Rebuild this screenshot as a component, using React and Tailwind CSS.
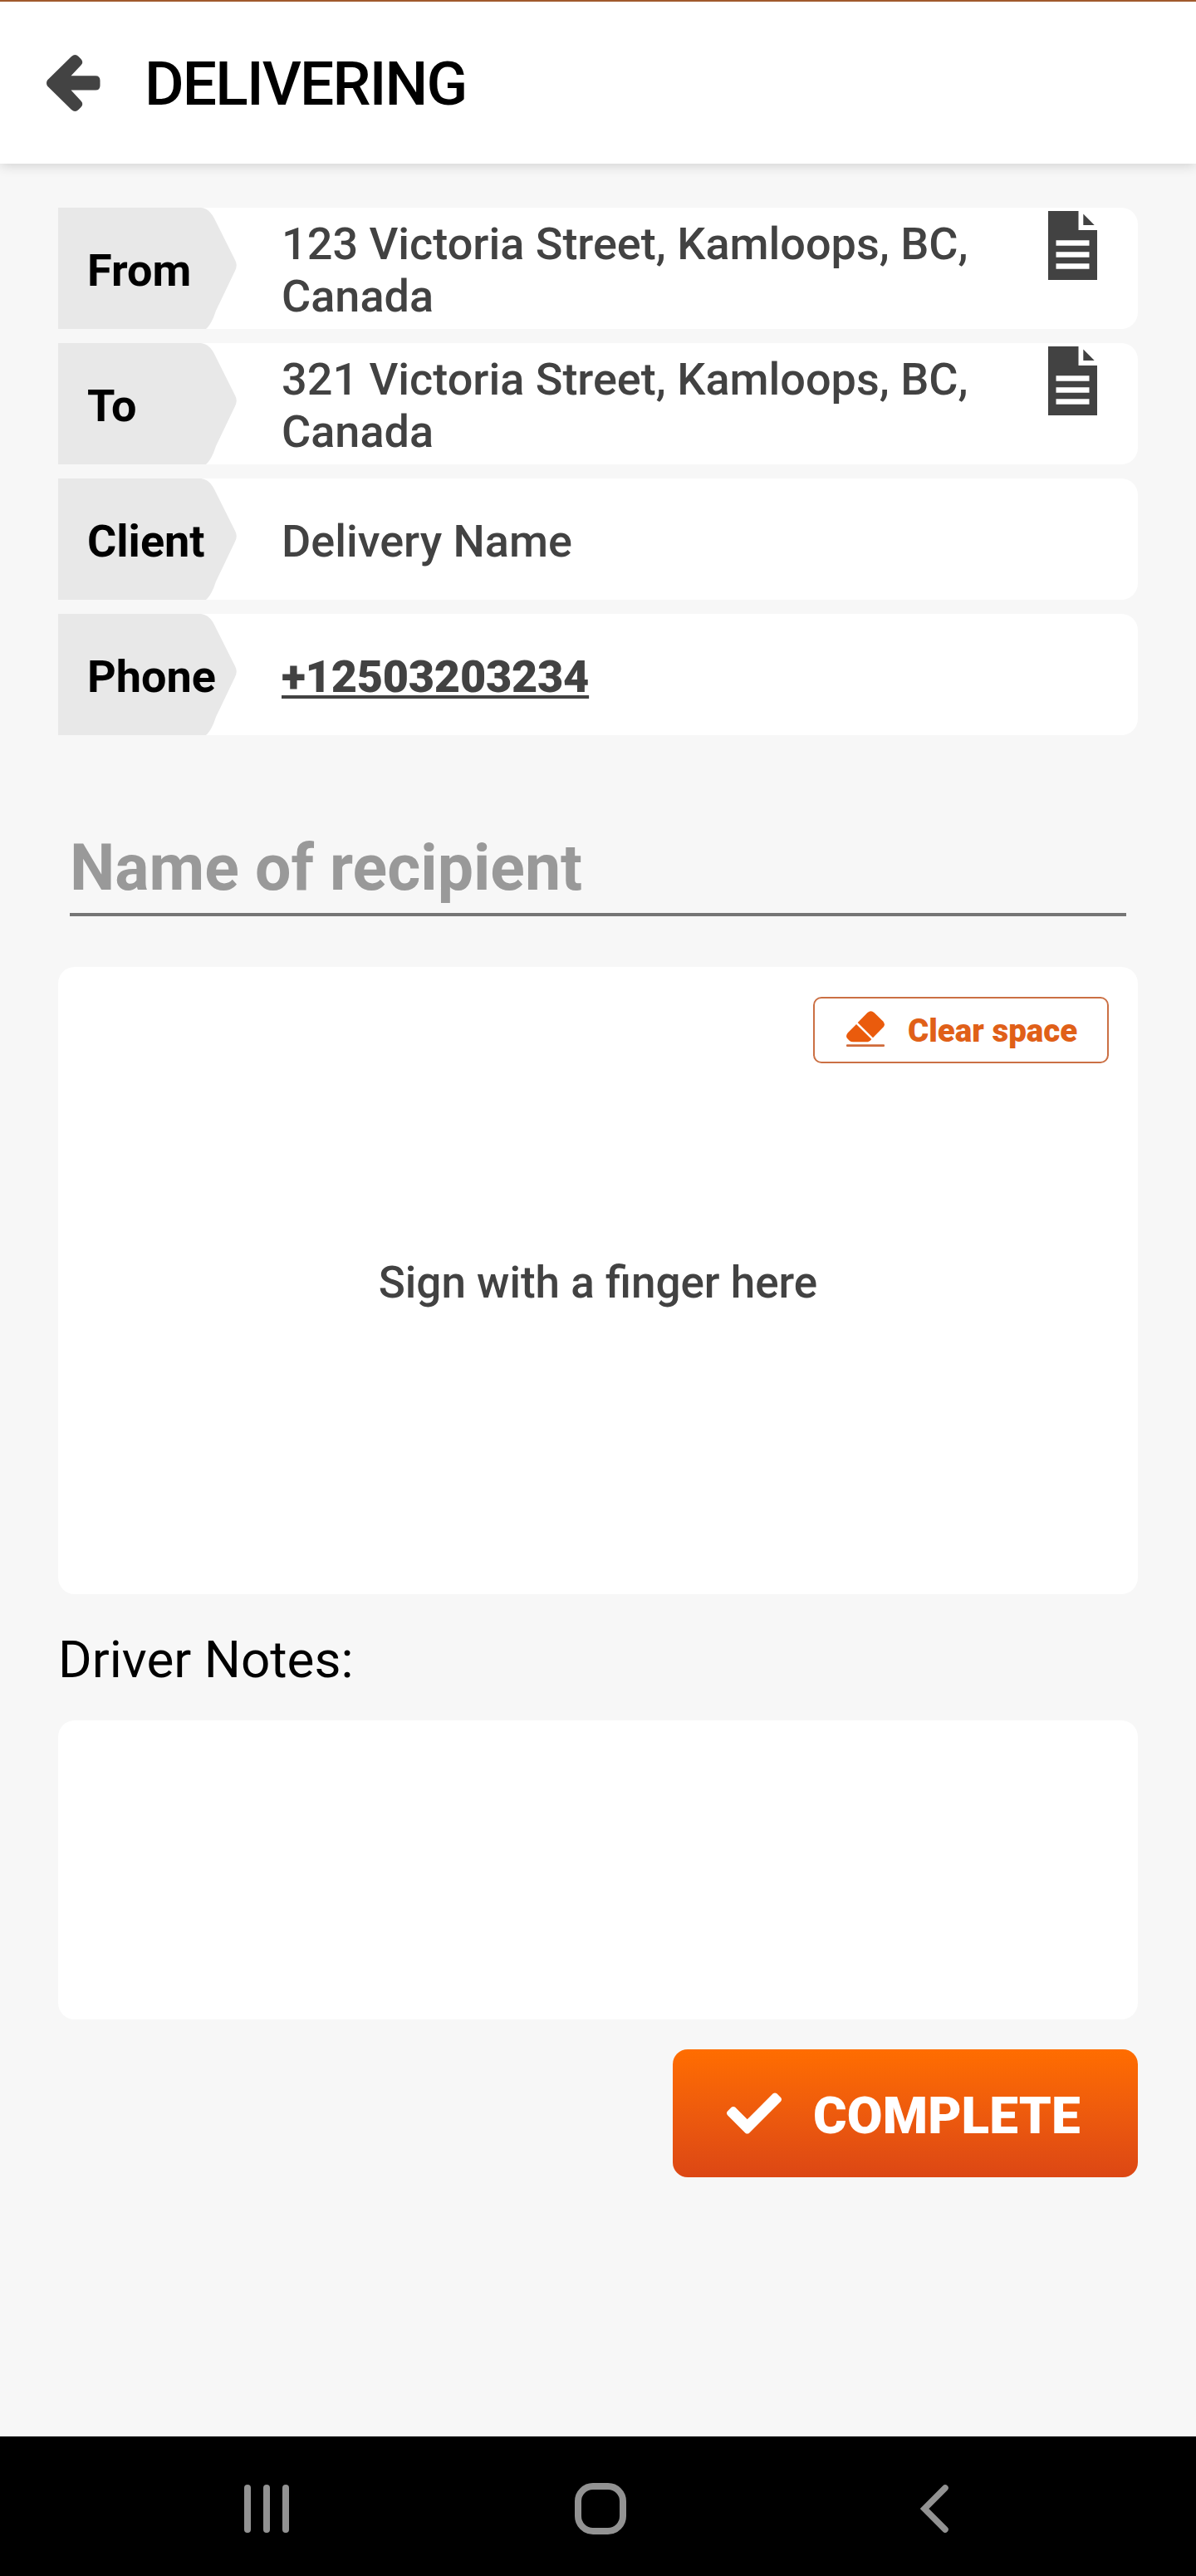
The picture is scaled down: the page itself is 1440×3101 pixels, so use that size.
import { FaCheck } from "react-icons/fa"

const details = [
  { label: "From", value: "123 Victoria Street, Kamloops, BC, Canada", hasNote: true },
  { label: "To", value: "321 Victoria Street, Kamloops, BC, Canada", hasNote: true },
  { label: "Client", value: "Delivery Name" },
  { label: "Phone", value: "+12503203234", isPhone: true },
]

function BackIcon() {
  return (
    <svg viewBox="0 0 65 68" className="w-[65px] h-[68px] shrink-0 fill-[#434343]">
      <path d="M1 30.5Q-1 34 1 37.5L30 66Q34.5 70 38.5 66L41.5 63Q45 59 41.5 55.5L29.5 42.6H59Q64.5 42.6 64.5 37V31Q64.5 25.3 59 25.3H29.5L41.5 12.5Q45 9 41.5 5L38.5 2Q34.5 -2 30 2Z" />
    </svg>
  )
}

function NoteIcon() {
  return (
    <svg viewBox="0 0 59 83" className="w-[59px] h-[83px] shrink-0 fill-[#424242]">
      <path
        fillRule="evenodd"
        d="M0 0H36.5V23H59V83H0ZM9.5 35.3V41.7H49.5V35.3ZM9.5 49.3V55.7H49.5V49.3ZM9.5 63.3V69.7H49.5V63.3Z"
      />
      <path d="M42.3 3.5V17H55.7Z" />
    </svg>
  )
}

function EraserIcon() {
  return (
    <svg viewBox="0 0 46 43" className="w-[46px] h-[43px] shrink-0 mb-1 fill-[#ea5b0c]">
      <path d="M13.7 14L25.5 2Q29.5 -1.6 33.5 2L44 12.2Q47.6 16 44.5 19.5L32 32.3Z" />
      <path d="M12 16L2 26Q-2 30.5 2 34L4 36Q5.5 37.3 8 37.3H26Q28 37.3 30.3 34Z" />
      <rect x="0" y="40.2" width="46" height="2.8" rx="1" className="fill-[#cf6a3a]" />
    </svg>
  )
}

function DetailRow({ item }) {
  return (
    <div className="flex h-[146px] bg-white rounded-r-[20px]">
      <div className="relative w-[215px] shrink-0 flex items-center pl-[35px] pt-1">
        <svg viewBox="0 0 215 146" className="absolute inset-0 w-[215px] h-[146px] fill-[#e8e8e8]">
          <path d="M0 0H172Q182 1 188 13L213 63Q216.5 69 213 76L190 124Q185 140 178 146H0Z" />
        </svg>
        <span className="relative text-[54px] leading-[63px] font-bold text-black">{item.label}</span>
      </div>
      <div className="flex-1 flex items-center pl-[54px] pt-1 text-[54px] leading-[63px] text-[#424242]">
        {item.isPhone ? (
          <span className="font-black tracking-[-0.25px] underline decoration-[4px] underline-offset-[4px]">{item.value}</span>
        ) : (
          <span className="w-[850px] font-medium">{item.value}</span>
        )}
      </div>
      {item.hasNote && (
        <div className="pt-1 pr-[49px]">
          <NoteIcon />
        </div>
      )}
    </div>
  )
}

export default function App() {
  return (
    <div className="flex flex-col w-[1440px] h-[3101px] bg-[#f7f7f7] font-['Roboto',sans-serif]">
      <header className="flex items-center h-[197px] pl-14 gap-[53px] bg-white border-t-2 border-[#a0592c] shadow-[0_2px_14px_rgba(0,0,0,0.16)]">
        <BackIcon />
        <h1 className="pt-1 text-[73px] leading-none font-medium tracking-[-1.8px] text-black">DELIVERING</h1>
      </header>

      <main className="flex-1 flex flex-col px-[70px] pt-[53px]">
        <div className="flex flex-col gap-[17px]">
          {details.map((item) => (
            <DetailRow key={item.label} item={item} />
          ))}
        </div>

        <div className="mt-[115px] mx-[14px] h-[103px] border-b-4 border-[#757575]">
          <p className="text-[77px] leading-[90px] font-bold text-[#999999]">Name of recipient</p>
        </div>

        <div className="flex flex-col mt-[61px] h-[755px] bg-white rounded-[20px]">
          <button className="self-end flex items-center w-[356px] h-20 mt-9 mr-[35px] pl-[38px] gap-7 border-2 border-[#cb7044] rounded-[10px]">
            <EraserIcon />
            <span className="pt-0.5 text-[38.5px] leading-none font-black text-[#e06018]">Clear space</span>
          </button>
          <p className="mt-[233px] text-center text-[53px] leading-[62px] font-medium text-[#424242]">
            Sign with a finger here
          </p>
        </div>

        <h2 className="mt-[43px] text-[62px] leading-[72px] text-black">Driver Notes:</h2>
        <div className="mt-[37px] h-[360px] bg-white rounded-[20px]" />

        <button className="self-end flex items-center w-[560px] h-[154px] mt-9 pl-[65px] gap-[38px] rounded-[18px] bg-linear-to-b from-[#ff6d00] to-[#dc4714] text-white">
          <FaCheck className="w-[66px] h-[66px]" />
          <span className="pt-[6px] text-[62px] leading-none font-black tracking-[0.1px]">COMPLETE</span>
        </button>
      </main>

      {/* system navigation */}
      <nav className="flex items-center h-[168px] pt-[6px] pl-[294px] bg-black">
        <div className="flex justify-between w-[54px] h-[58px]">
          <span className="w-2 rounded-full bg-[#929292]" />
          <span className="w-2 rounded-full bg-[#929292]" />
          <span className="w-2 rounded-full bg-[#929292]" />
        </div>
        <div className="ml-[344px] w-[62px] h-[62px] border-8 border-[#929292] rounded-[22px]" />
        <svg viewBox="0 0 34 58" className="ml-[354px] w-[34px] h-[58px] fill-none stroke-[#929292]">
          <path d="M30 4L5 29L30 54" strokeWidth="7.5" strokeLinecap="round" strokeLinejoin="miter" />
        </svg>
      </nav>
    </div>
  )
}
